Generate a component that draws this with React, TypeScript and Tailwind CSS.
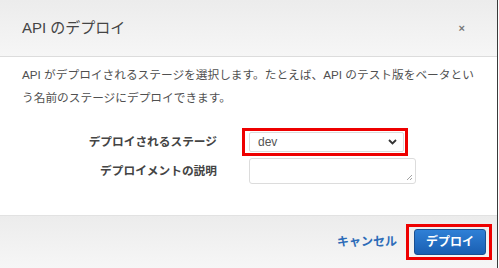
export default function App() {
  const font = { fontFamily: '"Liberation Sans", "Noto Sans CJK JP", sans-serif' }
  return (
    <div className="w-[499px] h-[268px] bg-white" style={font}>
      <div className="w-[498px] h-[268px] border-r border-[#3a3a3a] flex flex-col">
        <div className="h-[57px] shrink-0 flex items-center justify-between pl-[22px] pr-[32px] bg-gradient-to-b from-[#ececec] to-[#f6f6f6] border-b border-[#dcdcdc]">
          <span className="text-[15px] text-[#444]">API のデプロイ</span>
          <span className="text-[11px] font-bold text-[#777] leading-none">×</span>
        </div>

        <div className="flex-1 pt-[6px] px-[22px]">
          <p className="text-[11.7px] leading-[23px] text-[#505050] whitespace-nowrap">
            API がデプロイされるステージを選択します。たとえば、API のテスト版をベータとい
            <br />
            う名前のステージにデプロイできます。
          </p>

          <div className="mt-[23px] flex flex-col gap-[6px]">
            <div className="flex items-center">
              <label className="w-[195px] text-right text-[11.7px] font-bold text-[#444]">デプロイされるステージ</label>
              <div className="relative ml-[32px]">
                <div className="w-[155px] h-[20px] flex items-center justify-between pl-[8px] pr-[6px] border border-[#dcdcdc] rounded-[2px] bg-white">
                  <span className="text-[12px] text-[#555]">dev</span>
                  <svg width="9" height="6" viewBox="0 0 9 6" className="text-[#333]">
                    <path d="M1 1 L4.5 4.5 L8 1" fill="none" stroke="currentColor" strokeWidth="1.8" />
                  </svg>
                </div>
                <div className="absolute left-[-7px] right-[-4px] top-[-4px] bottom-[-4px] border-[3px] border-[#ee0000]" />
              </div>
            </div>
            <div className="flex items-center">
              <label className="w-[195px] text-right text-[11.7px] font-bold text-[#444]">デプロイメントの説明</label>
              <div className="relative ml-[32px] w-[167px] h-[26px] border border-[#dcdcdc] rounded-[3px] bg-white">
                <svg width="7" height="7" viewBox="0 0 7 7" className="absolute right-[2px] bottom-[2px] text-[#999]">
                  <path d="M6 1 L1 6 M6 4 L4 6" stroke="currentColor" strokeWidth="0.9" />
                </svg>
              </div>
            </div>
          </div>
        </div>

        <div className="h-[53px] shrink-0 flex items-center justify-end gap-[17px] pr-[11px] bg-gradient-to-b from-[#ececec] to-[#f6f6f6] border-t border-[#e2e2e2]">
          <span className="text-[12px] font-bold text-[#2d6cb8]">キャンセル</span>
          <div className="relative">
            <div className="w-[72px] h-[26px] flex items-center justify-center rounded-[3px] border border-[#1a4f90] bg-gradient-to-b from-[#2f80d6] to-[#1a5fb2] text-white text-[12px] font-bold">
              デプロイ
            </div>
            <div className="absolute left-[-8px] right-[-6px] top-[-5px] bottom-[-5px] border-[3px] border-[#ee0000]" />
          </div>
        </div>
      </div>
    </div>
  )
}
